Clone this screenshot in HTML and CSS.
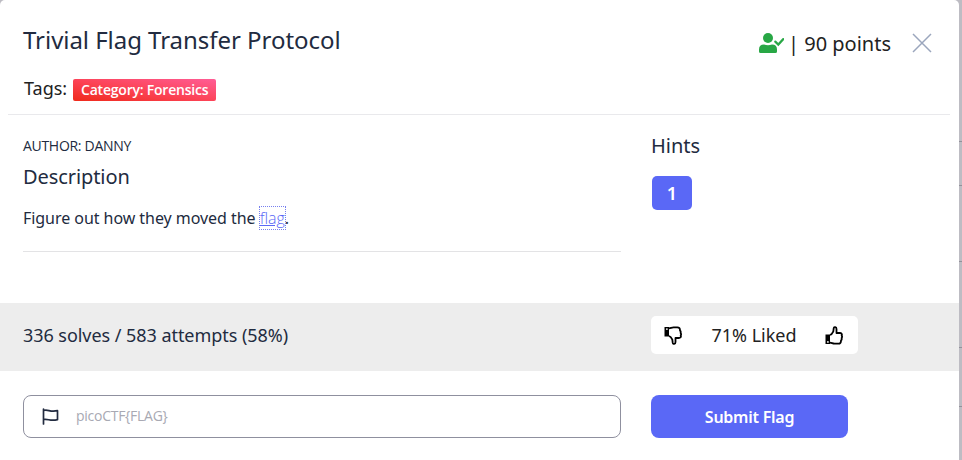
FILE: index.html
```
<!DOCTYPE html>
<html lang="en">
<head>
<meta charset="utf-8">
<title>Trivial Flag Transfer Protocol</title>
<link rel="stylesheet" href="styles.css">
</head>
<body>
<main class="modal">
  <header class="header">
    <div class="heading">
      <h1 class="title">Trivial Flag Transfer Protocol</h1>
      <div class="tags"><span>Tags:</span><span class="badge">Category: Forensics</span></div>
    </div>
    <div class="score">
      <svg class="user" viewBox="0 0 25 20"><circle cx="9" cy="5" r="5"/><path d="M0 20v-3.500Q0 11.500 5 11.500q4 1.400 8 0 5 0 5 5V18.500Q18 20 16.500 20H1.500Q0 20 0 18.500z"/><path class="tick" d="m16.300 8.600 3 3 5-5.500"/></svg>
      <span class="points">| 90 points</span>
      <svg class="close" viewBox="0 0 20 20"><path d="m1 1 18 18M19 1 1 19"/></svg>
    </div>
  </header>
  <section class="content">
    <div class="details">
      <div class="author">AUTHOR: DANNY</div>
      <h2 class="subtitle">Description</h2>
      <p class="text">Figure out how they moved the <a class="link" href="#">flag</a>.</p>
    </div>
    <div class="hints">
      <h2 class="subtitle">Hints</h2>
      <button class="hint">1</button>
    </div>
  </section>
  <section class="stats">
    <div class="solves">336 solves / 583 attempts (58%)</div>
    <div class="rating">
      <svg class="thumb down" viewBox="0 0 18 19"><path class="cuff" d="M.500 8.500h4.500v9.500H.500z"/><path d="M5 9c2-.5 2.600-2 3.300-3.500L8.700 2.300C9 .5 11.500.7 11.500 3v4h3.300c1.700 0 2.500 1.200 1.900 2.400.5.800.5 1.800-.1 2.600.3 1 0 2-.6 2.500.1 2-.8 3.200-2.700 3.200H9.500c-1.700 0-2.700-.8-4.500-1"/><circle class="dot" cx="2.900" cy="15.900" r=".9"/></svg>
      <span class="liked">71% Liked</span>
      <svg class="thumb" viewBox="0 0 18 19"><path class="cuff" d="M.500 8.500h4.500v9.500H.500z"/><path d="M5 9c2-.5 2.600-2 3.300-3.500L8.700 2.300C9 .5 11.500.7 11.500 3v4h3.300c1.700 0 2.500 1.200 1.900 2.400.5.800.5 1.800-.1 2.600.3 1 0 2-.6 2.500.1 2-.8 3.200-2.700 3.200H9.500c-1.700 0-2.700-.8-4.500-1"/><circle class="dot" cx="2.900" cy="15.900" r=".9"/></svg>
    </div>
  </section>
  <section class="submit">
    <label class="field">
      <svg class="flag" viewBox="0 0 17 17"><path d="M1.500 1v15M1.500 2.500c5-1.500 6 2 14 .2v9c-8 1.800-9-1.200-14-.2"/></svg>
      <input class="input" placeholder="picoCTF{FLAG}">
    </label>
    <button class="button">Submit Flag</button>
  </section>
</main>
<aside class="backdrop"><i></i><i></i><i></i><i></i><i></i></aside>
</body>
</html>
```
FILE: styles.css
```
* { box-sizing: border-box; }
body { margin: 0; height: 460px; overflow: hidden; display: flex; background: #bdbcc3; color: #222b40; font-family: "Noto Sans", sans-serif; }
h1, h2, p { margin: 0; font-weight: 400; }
svg { flex: none; }
button { border: 0; padding: 0; background: #5a68f6; color: #fff; }
.modal { width: 959px; height: 460px; background: #fff; border-radius: 5px 5px 0 0; }
.header { display: flex; justify-content: space-between; height: 115px; margin: 0 9px 0 8px; padding: 22px 18px 0 15px; border-bottom: 1px solid #e9e9ec; }
.title { font-size: 24px; letter-spacing: -.04px; line-height: 36px; white-space: nowrap; }
.tags { display: flex; align-items: flex-start; height: 22px; margin-top: 19px; padding-left: 1px; color: #222; font-size: 18px; line-height: 22px; }
.badge { width: 143px; height: 22px; margin: 2px 0 0 6px; border-radius: 2px; background: linear-gradient(to top right, #ef2a1b, #fc4356 48%, #ff5d96); color: #fff; font: 600 14px/22px "Open Sans", sans-serif; letter-spacing: -.22px; text-align: center; white-space: nowrap; }
.score { display: flex; height: 40px; color: #222; font-size: 20px; line-height: 44px; }
.user { width: 25px; height: 20px; margin: 11px 4px 0 0; fill: #28a745; }
.tick { fill: none; stroke: #28a745; stroke-width: 2.200; stroke-linecap: round; }
.points { width: 105px; white-space: nowrap; }
.close { width: 20px; height: 20px; margin: 11px 0 0 19px; fill: none; stroke: #9ba6bd; stroke-width: 1.500; }
.content { display: flex; gap: 30px; height: 188px; padding: 19px 23px 0; }
.details { width: 598px; height: 118px; border-bottom: 1px solid #e3e3e5; }
.author { font-family: "Open Sans", sans-serif; font-size: 14px; letter-spacing: -.3px; line-height: 24px; }
.subtitle { font-size: 20px; line-height: 24px; }
.details .subtitle { margin-top: 7px; letter-spacing: -.08px; }
.text { margin-top: 17px; font-size: 16px; letter-spacing: -.05px; line-height: 24px; }
.link { color: #5a68f6; font-family: "Open Sans", sans-serif; font-weight: 300; outline: 1px dotted #7780ee; }
.hint { display: block; width: 40px; height: 34px; margin: 18px 0 0 1px; border-radius: 5px; font: 600 18px/34px "Noto Sans", sans-serif; }
.stats { display: flex; height: 68px; padding: 13px 23px; background: #ededed; font-size: 18px; line-height: 38px; }
.solves { width: 628px; letter-spacing: -.05px; }
.rating { display: flex; align-items: center; justify-content: space-between; width: 207px; height: 38px; padding: 0 15px 0 13px; border-radius: 5px; background: #fff; color: #222; }
.liked { margin-left: 1px; }
.thumb { width: 18px; height: 19px; fill: none; stroke: #000; stroke-width: 1.800; stroke-linejoin: round; }
.cuff { fill: #000; stroke: none; }
.dot { fill: #fff; stroke: none; }
.down { transform: scaleY(-1); }
.submit { display: flex; gap: 30px; padding: 24px 23px 0; }
.field { display: flex; align-items: center; width: 598px; height: 43px; padding-left: 18px; border: 1px solid #8f909f; border-radius: 8px; }
.flag { width: 17px; height: 17px; margin-top: -1px; fill: none; stroke: #222b40; stroke-width: 1.700; stroke-linecap: round; stroke-linejoin: round; }
.input { width: 500px; height: 30px; margin: -2px 0 0 17px; padding: 0; border: 0; outline: 0; background: none; font: 14px/30px "Open Sans", sans-serif; letter-spacing: -.27px; }
.input::placeholder { color: #a8a9b3; opacity: 1; }
.button { width: 197px; height: 43px; padding-top: 1px; border-radius: 8px; font: 600 16px/42px "Noto Sans", sans-serif; letter-spacing: -.25px; }
.backdrop { width: 3px; display: flex; flex-direction: column; padding-top: 134px; }
.backdrop i { flex: none; width: 3px; height: 8px; margin-bottom: 41px; border-bottom: 1px solid #92919a; }
.backdrop i:nth-child(2) { height: 3px; margin-bottom: 67px; }
.backdrop i:nth-child(3) { height: 9px; margin-bottom: 77px; }
.backdrop i:nth-child(4) { height: 9px; margin-bottom: 51px; }
```
